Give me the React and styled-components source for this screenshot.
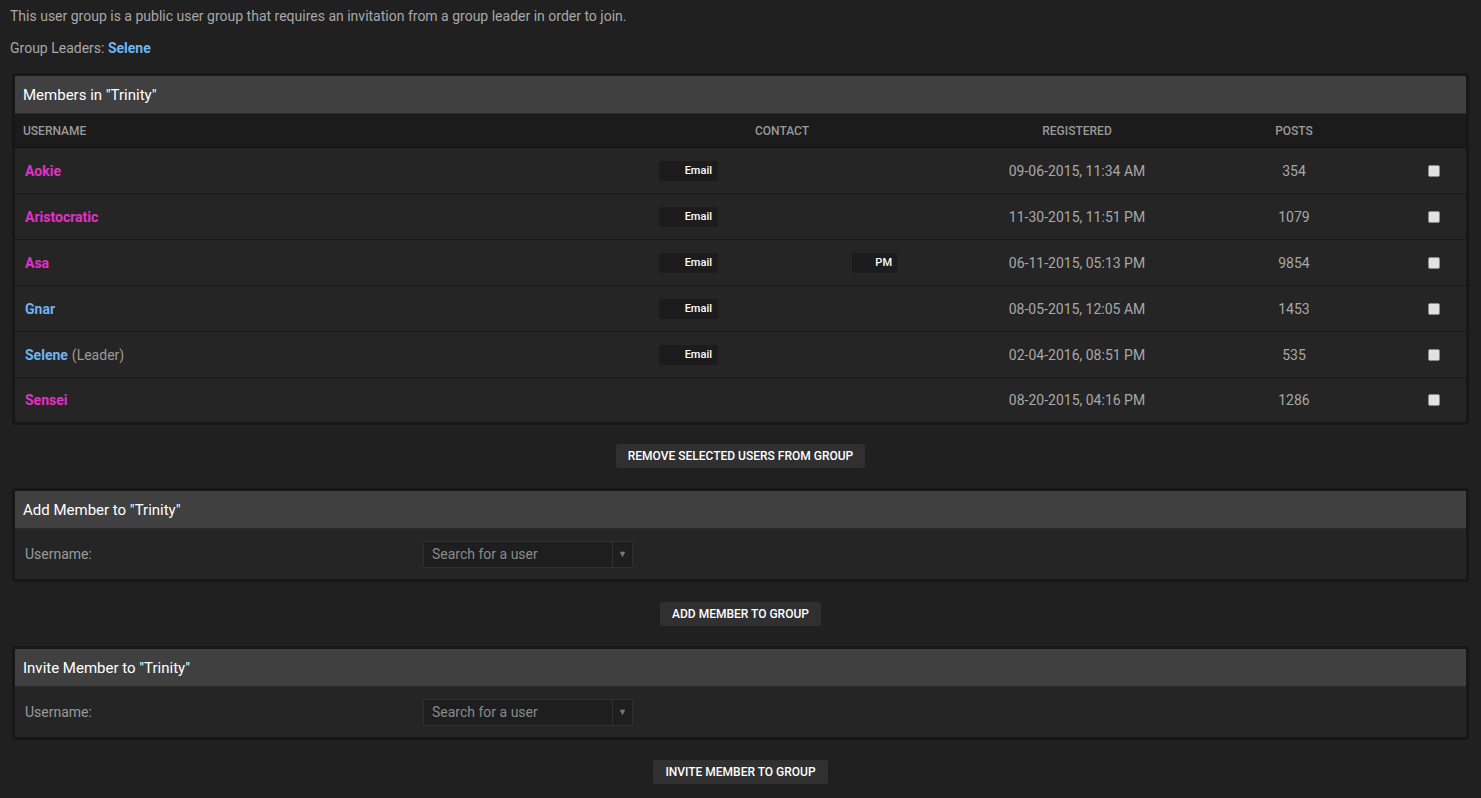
import React from "react";
import styled, { createGlobalStyle } from "styled-components";

const Global = createGlobalStyle`
  html, body { margin: 0; padding: 0; background: #202020; }
  body { font-family: Roboto, "Liberation Sans", sans-serif; font-size: 14px; color: #a8a8a8; }
`;

const Page = styled.div`
  padding: 6px 10px 14px 10px;
`;

const Intro = styled.p`
  margin: 0 0 ${(p) => (p.$last ? "15px" : "12px")} 0;
  line-height: 20px;
`;

const LeaderLink = styled.span`
  color: #6cb6f2;
  font-weight: 700;
`;

const Panel = styled.div`
  margin: 0 2px;
  border: 3px solid #171717;
  border-radius: 4px;
  background: #252525;
  overflow: hidden;
`;

const PanelHead = styled.div`
  height: 37px;
  display: flex;
  align-items: center;
  padding: 0 8px;
  background: #404040;
  border-bottom: 1px solid #2b2b2b;
  color: #fff;
  font-size: 15px;
`;

const cols = "637px 260px 330px 104px 1fr";

const HeadRow = styled.div`
  display: grid;
  grid-template-columns: ${cols};
  height: 33px;
  align-items: center;
  background: #1b1b1b;
  border-bottom: 1px solid #0f0f0f;
  font-size: 12px;
  font-weight: 500;
  color: #9a9a9a;
  text-transform: uppercase;
`;

const HeadCell = styled.div`
  text-align: ${(p) => p.$align || "center"};
  padding-left: ${(p) => (p.$align === "left" ? "8px" : "0")};
`;

const Row = styled.div`
  display: grid;
  grid-template-columns: ${cols};
  height: ${(p) => (p.$last ? "44px" : "45px")};
  align-items: center;
  background: #252525;
  border-bottom: ${(p) => (p.$last ? "none" : "1px solid #1a1a1a")};
`;

const NameCell = styled.div`
  padding-left: 10px;
`;

const Name = styled.span`
  font-weight: 700;
  color: ${(p) => (p.$pink ? "#e231c6" : "#6cb6f2")};
`;

const LeaderTag = styled.span`
  color: #9a9a9a;
  margin-left: 4px;
`;

const ContactCell = styled.div`
  display: grid;
  grid-template-columns: 193px 1fr;
  padding-left: 7px;
  align-items: center;
`;

const ContactBtn = styled.span`
  display: block;
  box-sizing: border-box;
  width: ${(p) => p.$w}px;
  height: 20px;
  line-height: 20px;
  background: #1c1c1c;
  border-radius: 2px;
  color: #fff;
  font-size: 11px;
  font-weight: 500;
  text-align: right;
  padding-right: ${(p) => p.$pr}px;
`;

const Center = styled.div`
  text-align: center;
  color: #a8a8a8;
`;

const CheckCell = styled.div`
  display: flex;
  justify-content: flex-end;
  padding-right: 26px;
`;

const Check = styled.span`
  display: block;
  width: 10px;
  height: 10px;
  background: #e2e2e2;
  border: 1px solid #8a8a8a;
  border-radius: 2px;
`;

const Actions = styled.div`
  display: flex;
  justify-content: center;
  padding: ${(p) => p.$pad || "20px 0 20px 0"};
`;

const Button = styled.button`
  height: 24px;
  padding: 0 12px;
  border: none;
  border-radius: 2px;
  background: #303030;
  color: #fff;
  font-family: Roboto, "Liberation Sans", sans-serif;
  font-size: 12px;
  font-weight: 500;
  text-transform: uppercase;
  cursor: pointer;
`;

const FormRow = styled.div`
  display: grid;
  grid-template-columns: 408px 1fr;
  align-items: center;
  height: 50px;
  background: #252525;
`;

const Label = styled.div`
  padding-left: 10px;
  color: #9a9a9a;
`;

const Select = styled.div`
  display: flex;
  width: 210px;
  height: 27px;
  box-sizing: border-box;
  background: #1e1e1e;
  border: 1px solid #303030;
  border-radius: 2px;
`;

const SelectText = styled.div`
  flex: 1;
  display: flex;
  align-items: center;
  padding-left: 8px;
  color: #8a8a8a;
`;

const SelectArrow = styled.div`
  width: 19px;
  border-left: 1px solid #303030;
  display: flex;
  align-items: center;
  justify-content: center;
  color: #7a7a7a;
  font-size: 9px;
`;

const members = [
  { name: "Aokie", pink: true, email: true, date: "09-06-2015, 11:34 AM", posts: 354 },
  { name: "Aristocratic", pink: true, email: true, date: "11-30-2015, 11:51 PM", posts: 1079 },
  { name: "Asa", pink: true, email: true, pm: true, date: "06-11-2015, 05:13 PM", posts: 9854 },
  { name: "Gnar", email: true, date: "08-05-2015, 12:05 AM", posts: 1453 },
  { name: "Selene", leader: true, email: true, date: "02-04-2016, 08:51 PM", posts: 535 },
  { name: "Sensei", pink: true, date: "08-20-2015, 04:16 PM", posts: 1286 },
];

function UserForm({ title, action }) {
  return (
    <>
      <Panel>
        <PanelHead>{title}</PanelHead>
        <FormRow>
          <Label>Username:</Label>
          <Select>
            <SelectText>Search for a user</SelectText>
            <SelectArrow>▼</SelectArrow>
          </Select>
        </FormRow>
      </Panel>
      <Actions>
        <Button>{action}</Button>
      </Actions>
    </>
  );
}

export default function App() {
  return (
    <Page>
      <Global />
      <Intro>This user group is a public user group that requires an invitation from a group leader in order to join.</Intro>
      <Intro $last>
        Group Leaders: <LeaderLink>Selene</LeaderLink>
      </Intro>
      <Panel>
        <PanelHead>Members in "Trinity"</PanelHead>
        <HeadRow>
          <HeadCell $align="left">Username</HeadCell>
          <HeadCell>Contact</HeadCell>
          <HeadCell>Registered</HeadCell>
          <HeadCell>Posts</HeadCell>
          <HeadCell />
        </HeadRow>
        {members.map((m, i) => (
          <Row key={m.name} $last={i === members.length - 1}>
            <NameCell>
              <Name $pink={m.pink}>{m.name}</Name>
              {m.leader && <LeaderTag>(Leader)</LeaderTag>}
            </NameCell>
            <ContactCell>
              <div>{m.email && <ContactBtn $w={59} $pr={6}>Email</ContactBtn>}</div>
              <div>{m.pm && <ContactBtn $w={45} $pr={5}>PM</ContactBtn>}</div>
            </ContactCell>
            <Center>{m.date}</Center>
            <Center>{m.posts}</Center>
            <CheckCell>
              <Check />
            </CheckCell>
          </Row>
        ))}
      </Panel>
      <Actions $pad="19px 0 20px 0">
        <Button>Remove Selected Users From Group</Button>
      </Actions>
      <UserForm title={'Add Member to "Trinity"'} action="Add Member to Group" />
      <UserForm title={'Invite Member to "Trinity"'} action="Invite Member to Group" />
    </Page>
  );
}
